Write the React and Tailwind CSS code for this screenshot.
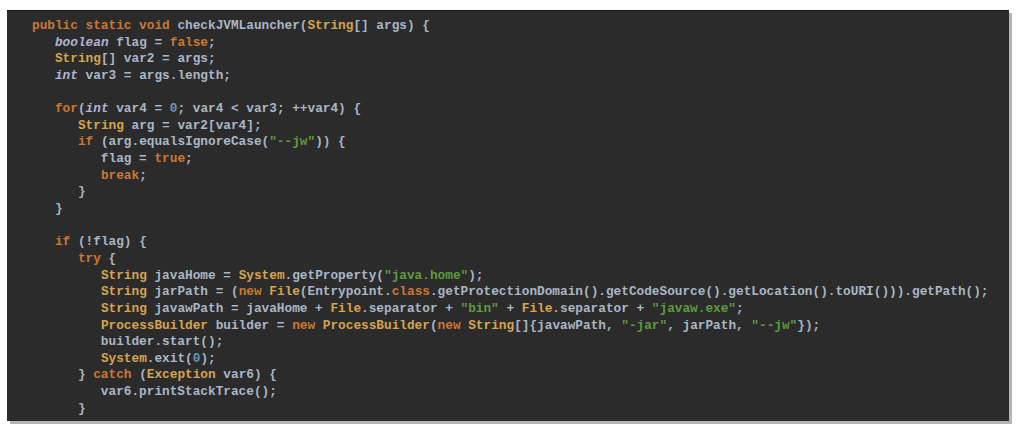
import React from "react";

const K = "text-[#cc7832]";
const T = "text-[#d5a44e]";
const P = "text-[#a9b7c6]";
const I = "text-[#b0b4d4] italic";
const N = "text-[#6897bb]";
const S = "text-[#5f9a3c]";

const lines = [
  [[K, "public static void "], [P, "checkJVMLauncher("], [T, "String"], [P, "[] args) {"]],
  [[P, "   "], [I, "boolean"], [P, " flag = "], [K, "false"], [P, ";"]],
  [[P, "   "], [T, "String"], [P, "[] var2 = args;"]],
  [[P, "   "], [I, "int"], [P, " var3 = args.length;"]],
  [],
  [[P, "   "], [K, "for"], [P, "("], [I, "int"], [P, " var4 = "], [N, "0"], [P, "; var4 < var3; ++var4) {"]],
  [[P, "      "], [T, "String"], [P, " arg = var2[var4];"]],
  [[P, "      "], [K, "if"], [P, " (arg.equalsIgnoreCase("], [S, "\"--jw\""], [P, ")) {"]],
  [[P, "         flag = "], [K, "true"], [P, ";"]],
  [[P, "         "], [K, "break"], [P, ";"]],
  [[P, "      }"]],
  [[P, "   }"]],
  [],
  [[P, "   "], [K, "if"], [P, " (!flag) {"]],
  [[P, "      "], [K, "try"], [P, " {"]],
  [[P, "         "], [T, "String"], [P, " javaHome = "], [T, "System"], [P, ".getProperty("], [S, "\"java.home\""], [P, ");"]],
  [[P, "         "], [T, "String"], [P, " jarPath = ("], [K, "new"], [P, " "], [T, "File"], [P, "(Entrypoint."], [K, "class"], [P, ".getProtectionDomain().getCodeSource().getLocation().toURI())).getPath();"]],
  [[P, "         "], [T, "String"], [P, " javawPath = javaHome + "], [T, "File"], [P, ".separator + "], [S, "\"bin\""], [P, " + "], [T, "File"], [P, ".separator + "], [S, "\"javaw.exe\""], [P, ";"]],
  [[P, "         "], [T, "ProcessBuilder"], [P, " builder = "], [K, "new"], [P, " "], [T, "ProcessBuilder"], [P, "("], [K, "new"], [P, " "], [T, "String"], [P, "[]{javawPath, "], [S, "\"-jar\""], [P, ", jarPath, "], [S, "\"--jw\""], [P, "});"]],
  [[P, "         builder.start();"]],
  [[P, "         "], [T, "System"], [P, ".exit("], [N, "0"], [P, ");"]],
  [[P, "      } "], [K, "catch"], [P, " ("], [T, "Exception"], [P, " var6) {"]],
  [[P, "         var6.printStackTrace();"]],
  [[P, "      }"]],
];

export default function App() {
  return (
    <div className="w-[1024px] h-[436px] bg-white pt-[10px] pl-[7px]">
      <div className="w-[1002px] h-[411px] bg-[#2b2b2b] border-t border-[#151515] shadow-[3px_3px_0_#b5b5b5] pl-[25px] pt-[7px]">
        <pre
          className="m-0 text-[12.76px] leading-[16.65px] font-bold"
          style={{ fontFamily: '"Liberation Mono", monospace' }}
        >
          {lines.map((ln, i) => (
            <div key={i} className="h-[16.65px] whitespace-pre">
              {ln.map(([c, t], j) => (
                <span key={j} className={c}>
                  {t}
                </span>
              ))}
            </div>
          ))}
        </pre>
      </div>
    </div>
  );
}
